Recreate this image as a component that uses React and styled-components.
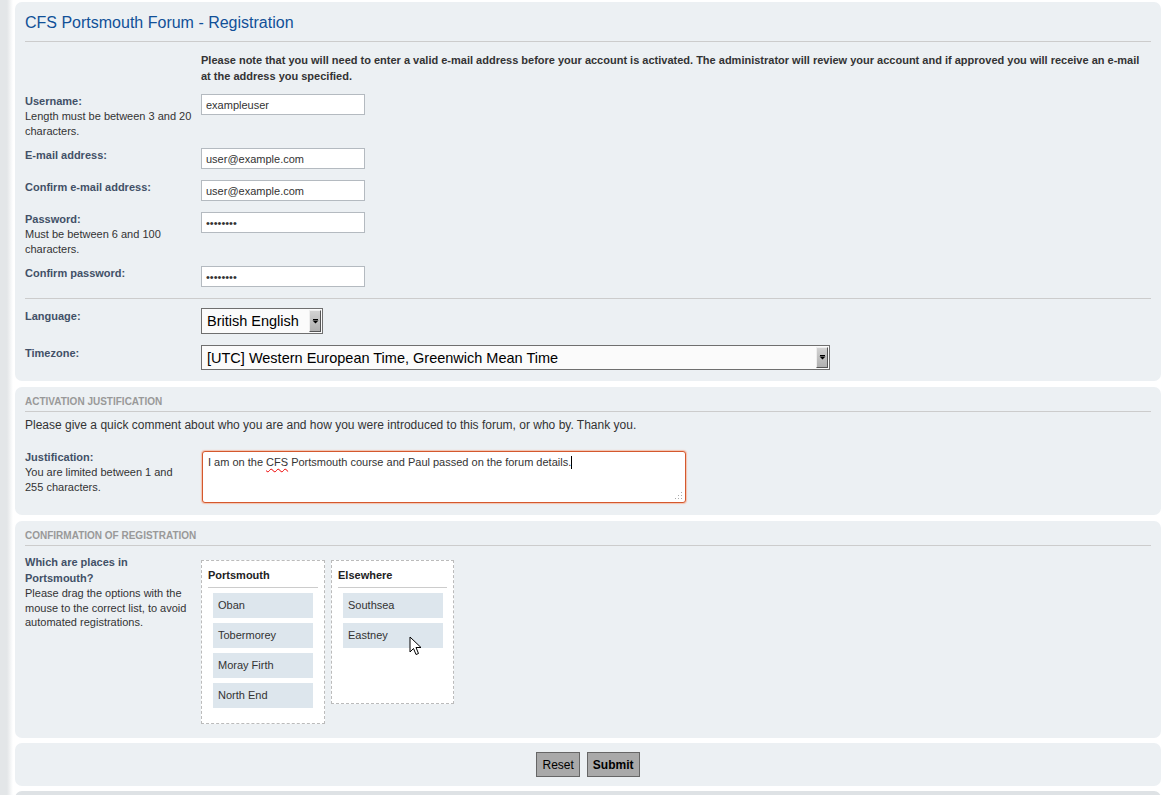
import React from 'react'
import styled, { createGlobalStyle } from 'styled-components'

const GlobalStyle = createGlobalStyle`
  html, body {
    margin: 0;
    padding: 0;
    overflow: hidden;
  }
  body {
    background: linear-gradient(to right, #e3e6e8 0, #e3e6e8 7px, #fff 13px);
    font-family: "Liberation Sans", Arial, Helvetica, sans-serif;
    color: #333;
  }
`;

export default function App() {
  return (
    <>
      <GlobalStyle />
      <Page>
        <Panel $pad="11px 10px 11px">
          <Title>CFS Portsmouth Forum - Registration</Title>
          <Notice>
            Please note that you will need to enter a valid e-mail address before your account is activated. The administrator will review your account and if approved you will receive an e-mail at the address you specified.
          </Notice>
          <Fields>
            <Row>
              <Label>
                Username:
                <Explain>Length must be between 3 and 20 characters.</Explain>
              </Label>
              <Field><Input value="exampleuser" readOnly /></Field>
            </Row>
            <Row>
              <Label>E-mail address:</Label>
              <Field><Input value="user@example.com" readOnly /></Field>
            </Row>
            <Row>
              <Label>Confirm e-mail address:</Label>
              <Field><Input value="user@example.com" readOnly /></Field>
            </Row>
            <Row>
              <Label>
                Password:
                <Explain>Must be between 6 and 100 characters.</Explain>
              </Label>
              <Field><Input type="password" value="password" readOnly /></Field>
            </Row>
            <Row>
              <Label>Confirm password:</Label>
              <Field><Input type="password" value="password" readOnly /></Field>
            </Row>
          </Fields>
          <Divider />
          <Fields $top={0}>
            <Row $space={11}>
              <Label>Language:</Label>
              <Field $top={0}>
                <Select $w={122} $h={26}>
                  British English
                  <Arrow><ArrowGlyph /></Arrow>
                </Select>
              </Field>
            </Row>
            <Row>
              <Label>Timezone:</Label>
              <Field $top={0}>
                <Select $w={629} $h={25}>
                  [UTC] Western European Time, Greenwich Mean Time
                  <Arrow><ArrowGlyph /></Arrow>
                </Select>
              </Field>
            </Row>
          </Fields>
        </Panel>

        <Panel $pad="8px 10px 12px">
          <SectionHead>Activation justification</SectionHead>
          <Intro>Please give a quick comment about who you are and how you were introduced to this forum, or who by. Thank you.</Intro>
          <Fields $top={16}>
            <Row>
              <Label>
                Justification:
                <Explain>You are limited between 1 and 255 characters.</Explain>
              </Label>
              <Field $top={2}>
                <TextBox>
                  I am on the <Misspelt>CFS</Misspelt> Portsmouth course and Paul passed on the forum details.<Caret />
                  <Grip viewBox="0 0 10 10">
                    {[[8, 2], [8, 5], [5, 5], [8, 8], [5, 8], [2, 8]].map(([x, y]) => (
                      <rect key={x + '-' + y} x={x} y={y} width="1" height="1" fill="#aaa" />
                    ))}
                  </Grip>
                </TextBox>
              </Field>
            </Row>
          </Fields>
        </Panel>

        <Panel $pad="8px 10px 14px" $mb={5}>
          <SectionHead>Confirmation of registration</SectionHead>
          <Fields $top={8}>
            <Row>
              <Label>
                Which are places in Portsmouth?
                <Explain>Please drag the options with the mouse to the correct list, to avoid automated registrations.</Explain>
              </Label>
              <Field $top={6}>
                <Lists>
                  <DropBox $w={124}>
                    <BoxHead>Portsmouth</BoxHead>
                    <Items>
                      <Item>Oban</Item>
                      <Item>Tobermorey</Item>
                      <Item>Moray Firth</Item>
                      <Item>North End</Item>
                    </Items>
                  </DropBox>
                  <DropBox $w={123}>
                    <BoxHead>Elsewhere</BoxHead>
                    <Items>
                      <Item>Southsea</Item>
                      <Item>Eastney</Item>
                    </Items>
                    <Pointer viewBox="0 0 13 20">
                      <path d="M1 1 L1 16 L4.5 12.5 L7 18.5 L9.5 17.5 L7 11.5 L12 11.5 Z" fill="#fff" stroke="#000" strokeWidth="1" strokeLinejoin="round" />
                    </Pointer>
                  </DropBox>
                </Lists>
              </Field>
            </Row>
          </Fields>
        </Panel>

        <Panel $pad="9px 10px 9px" $mb={5}>
          <Buttons>
            <Button>Reset</Button>
            <Button $primary>Submit</Button>
          </Buttons>
        </Panel>

        <Panel $pad="10px" $bg="#dee2e5" />
      </Page>
    </>
  )
}

const ArrowGlyph = () => (
  <svg width="7" height="5" viewBox="0 0 7 5">
    <rect x="1" y="0" width="5" height="1" fill="#000" />
    <path d="M0.5 1.5 L6.5 1.5 L3.5 4.5 Z" fill="#000" />
  </svg>
);

const Page = styled.div`
  padding: 2px 0 0 15px;
`;

const Panel = styled.div`
  background: ${p => p.$bg || '#ecf0f3'};
  border-radius: 7px;
  padding: ${p => p.$pad};
  margin-bottom: ${p => (p.$mb ?? 6)}px;
  min-height: 10px;
`;

const Title = styled.h2`
  margin: 0;
  font-size: 16px;
  line-height: 20px;
  font-weight: normal;
  color: #115098;
  padding-bottom: 8px;
  border-bottom: 1px solid #ccc;
`;

const Notice = styled.p`
  margin: 10px 0 0 176px;
  font-size: 11px;
  line-height: 16px;
  font-weight: bold;
  color: #333;
`;

const Fields = styled.div`
  margin-top: ${p => (p.$top ?? 9)}px;
`;

const Row = styled.div`
  display: grid;
  grid-template-columns: 167px 1fr;
  column-gap: 9px;
  align-items: start;
  min-height: 23px;
  margin-bottom: ${p => (p.$space ?? 9)}px;
  &:last-child {
    margin-bottom: 0;
  }
`;

const Label = styled.div`
  font-size: 11px;
  line-height: 16px;
  font-weight: bold;
  color: #425067;
`;

const Explain = styled.span`
  display: block;
  font-weight: normal;
  line-height: 14.5px;
  color: #333;
`;

const Field = styled.div`
  padding-top: ${p => (p.$top ?? 1)}px;
`;

const Input = styled.input`
  box-sizing: border-box;
  width: 164px;
  height: 21px;
  margin: 0;
  padding: 0 4px;
  border: 1px solid #b4bac0;
  background: #fff;
  font-family: "Liberation Sans", Arial, sans-serif;
  font-size: 11px;
  color: #333;
  outline: none;
`;

const Divider = styled.div`
  border-top: 1px solid #ccc;
  margin: 10px 0 9px;
`;

const Select = styled.div`
  box-sizing: border-box;
  width: ${p => p.$w}px;
  height: ${p => p.$h}px;
  display: flex;
  align-items: center;
  justify-content: space-between;
  padding-left: 5px;
  border: 1px solid #6f6f6f;
  background: #fbfbfb;
  font-size: 14.5px;
  color: #000;
  white-space: nowrap;
`;

const Arrow = styled.span`
  align-self: stretch;
  box-sizing: border-box;
  width: 12px;
  margin: 1px 1px 1px 0;
  display: flex;
  align-items: center;
  justify-content: center;
  background: linear-gradient(to bottom, #d2d2d2, #b0b0b0);
  border-top: 1px solid #eee;
  border-left: 1px solid #eee;
  border-right: 1px solid #555;
  border-bottom: 1px solid #555;
`;

const SectionHead = styled.h3`
  margin: 0;
  font-size: 10px;
  line-height: 14px;
  font-weight: bold;
  text-transform: uppercase;
  color: #999;
  padding-bottom: 2px;
  border-bottom: 1px solid #ccc;
`;

const Intro = styled.p`
  margin: 5px 0 0;
  font-size: 12px;
  line-height: 16px;
  color: #333;
`;

const TextBox = styled.div`
  position: relative;
  box-sizing: border-box;
  width: 484px;
  height: 52px;
  margin-left: 1px;
  padding: 3px 5px;
  background: #fff;
  border: 1px solid #d4582d;
  border-radius: 3px;
  box-shadow: 0 0 1px 1px #f3c2b0;
  font-size: 11px;
  line-height: 15px;
  color: #333;
`;

const Misspelt = styled.span`
  text-decoration: underline wavy #e00;
  text-decoration-thickness: 1px;
  text-underline-offset: 2px;
`;

const Caret = styled.span`
  display: inline-block;
  width: 1px;
  height: 13px;
  background: #000;
  vertical-align: -3px;
`;

const Grip = styled.svg`
  position: absolute;
  right: 2px;
  bottom: 2px;
  width: 10px;
  height: 10px;
`;

const Lists = styled.div`
  display: flex;
  align-items: flex-start;
  gap: 6px;
`;

const DropBox = styled.div`
  position: relative;
  box-sizing: border-box;
  width: ${p => p.$w}px;
  padding: 6px 6px 10px 6px;
  background: #fff;
  border: 1px dashed #bbb;
`;

const BoxHead = styled.div`
  font-size: 11px;
  line-height: 16px;
  font-weight: bold;
  color: #222;
  padding-bottom: 4px;
  border-bottom: 1px solid #ccc;
`;

const Items = styled.ul`
  list-style: none;
  margin: 5px 0 0 5px;
  padding: 0;
  min-height: 100px;
`;

const Item = styled.li`
  box-sizing: border-box;
  width: 100px;
  height: 25px;
  margin-bottom: 5px;
  padding-left: 5px;
  background: #dde6ed;
  font-size: 11px;
  line-height: 25px;
  color: #333;
`;

const Pointer = styled.svg`
  position: absolute;
  left: 77px;
  top: 75px;
  width: 13px;
  height: 20px;
`;

const Buttons = styled.div`
  display: flex;
  justify-content: center;
  gap: 7px;
`;

const Button = styled.button`
  box-sizing: border-box;
  height: 25px;
  margin: 0;
  padding: 0 5px;
  border: 1px solid #666;
  background: #a9a9a9;
  font-family: "Liberation Sans", Arial, sans-serif;
  font-size: 12px;
  font-weight: ${p => (p.$primary ? 'bold' : 'normal')};
  color: #000;
  cursor: pointer;
`;
